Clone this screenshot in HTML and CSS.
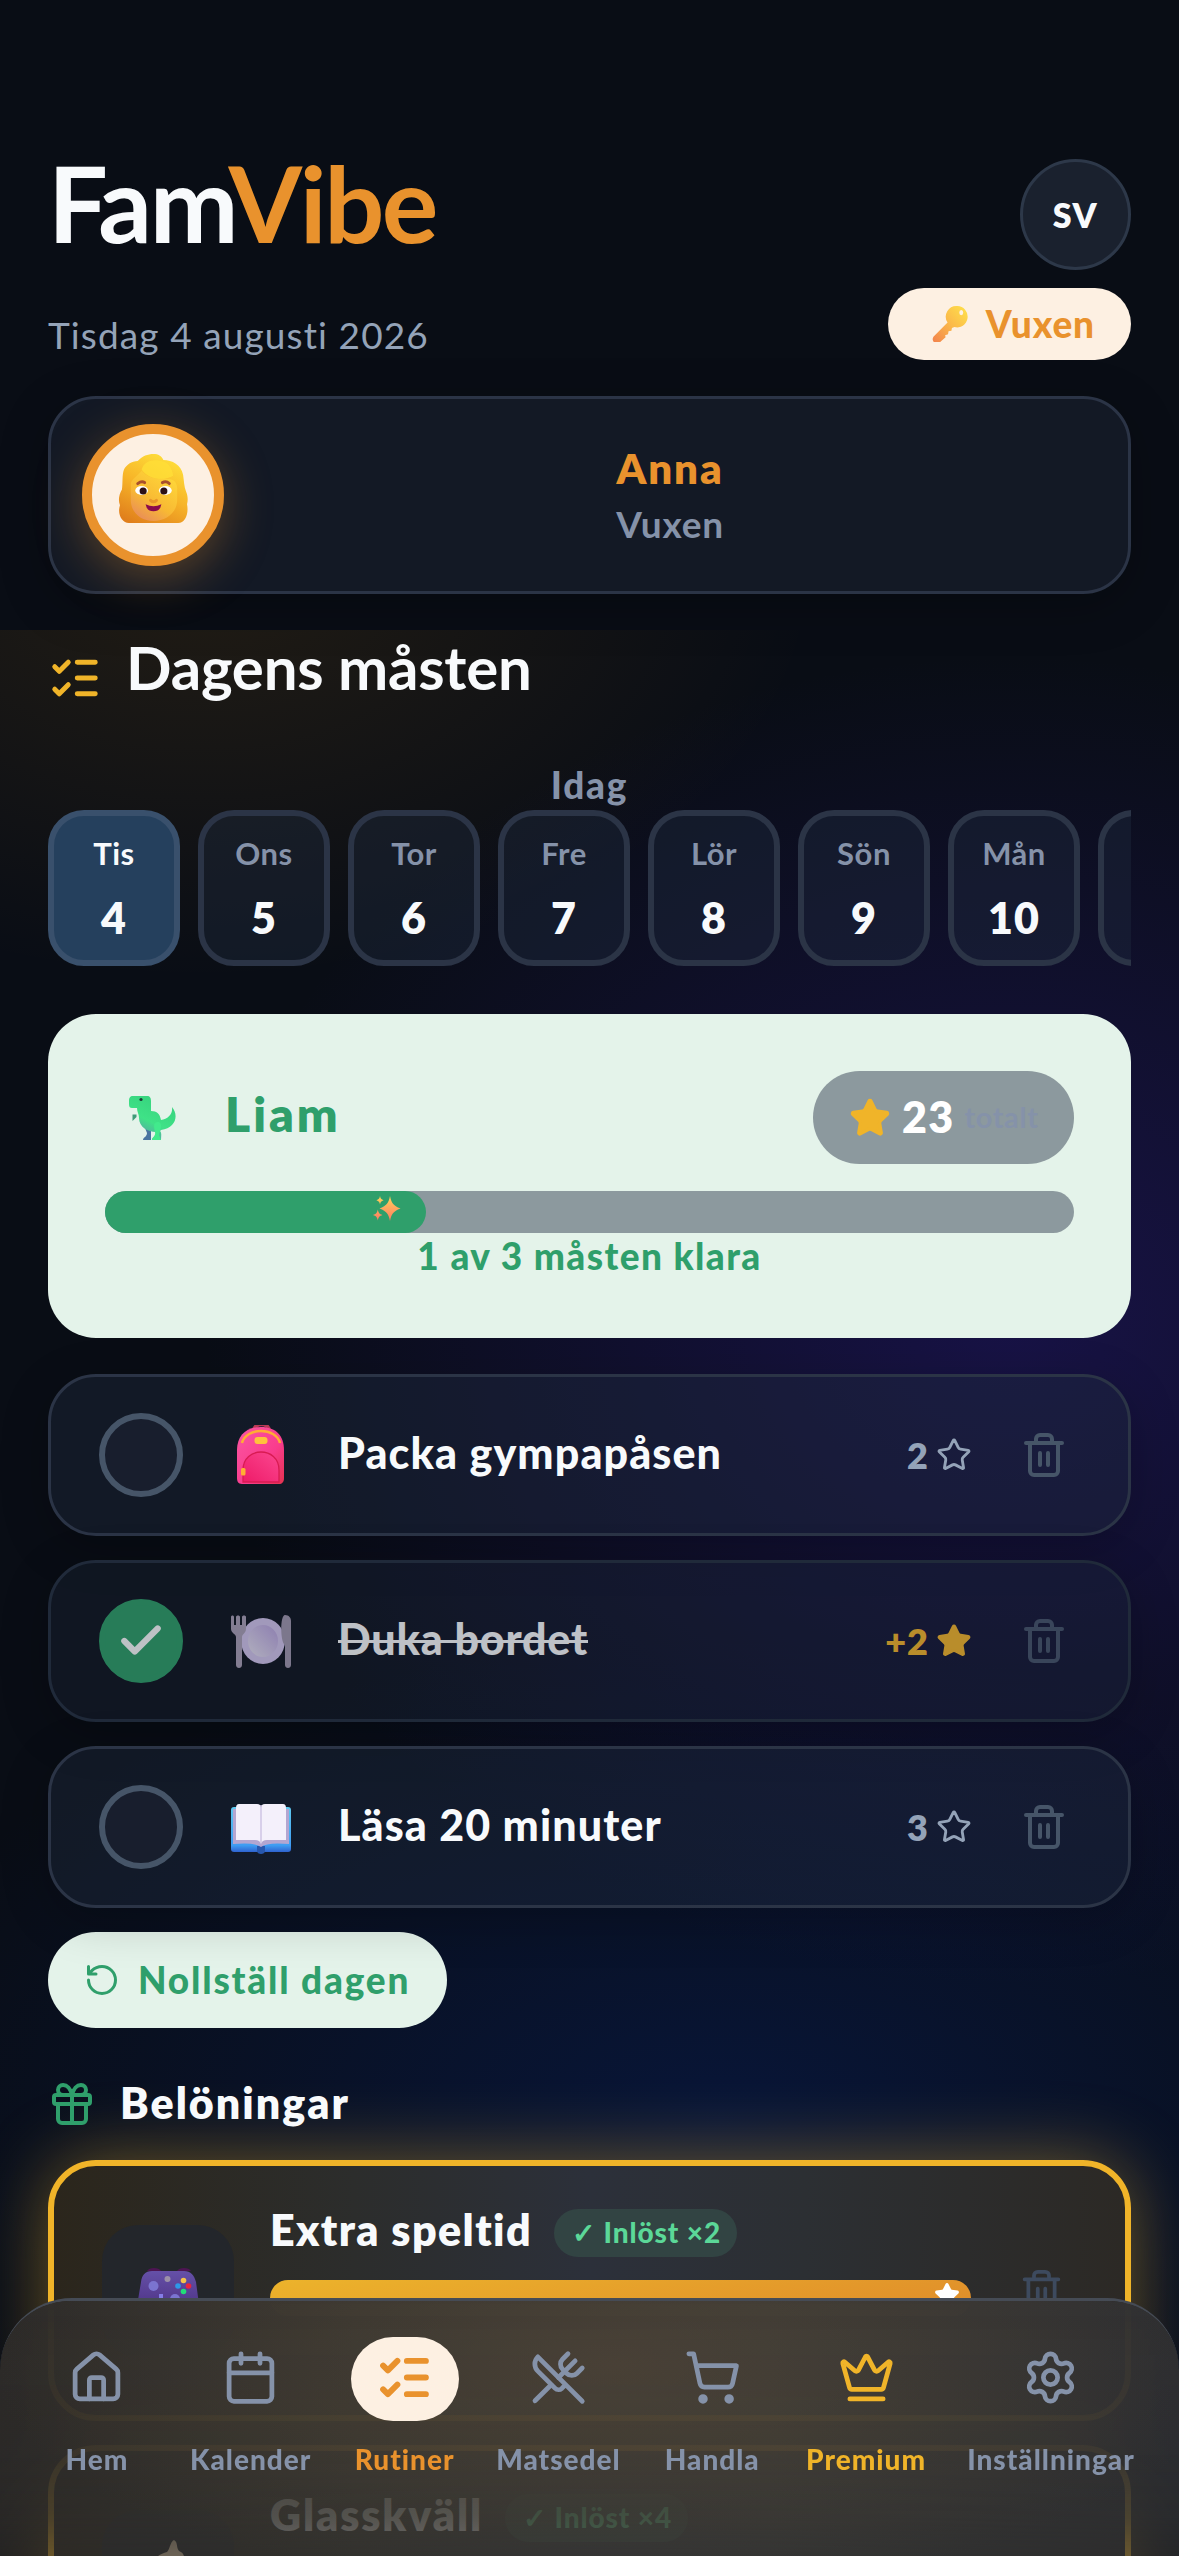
FILE: index.html
```html
<!DOCTYPE html>
<html lang="sv">
<head>
<meta charset="utf-8">
<title>FamVibe – Rutiner</title>
<link rel="stylesheet" href="styles.css">
</head>
<body>
<svg class="defs" aria-hidden="true">
  <defs>
    <symbol id="star" viewBox="0 0 24 24"><path d="M11.525 2.295a.53.53 0 0 1 .95 0l2.31 4.679a2.123 2.123 0 0 0 1.595 1.16l5.166.756a.53.53 0 0 1 .294.904l-3.736 3.638a2.123 2.123 0 0 0-.611 1.878l.882 5.14a.53.53 0 0 1-.771.56l-4.618-2.428a2.122 2.122 0 0 0-1.973 0L6.396 21.01a.53.53 0 0 1-.77-.56l.881-5.139a2.122 2.122 0 0 0-.611-1.879L2.16 9.795a.53.53 0 0 1 .294-.906l5.165-.755a2.122 2.122 0 0 0 1.597-1.16z"/></symbol>
    <symbol id="trash" viewBox="0 0 24 24"><path d="M10 11v6M14 11v6M19 6v14a2 2 0 0 1-2 2H7a2 2 0 0 1-2-2V6M3 6h18M8 6V4a2 2 0 0 1 2-2h4a2 2 0 0 1 2 2v2"/></symbol>
    <symbol id="checks" viewBox="0 0 24 24"><path d="M13 5h8M13 12h8M13 19h8M3 17l2 2 4-4M3 7l2 2 4-4"/></symbol>
    <linearGradient id="gKey" x1="1" y1="0" x2="0" y2="1"><stop offset="0" stop-color="#ffe34a"/><stop offset=".5" stop-color="#fbb84a"/><stop offset="1" stop-color="#f2804c"/></linearGradient>
    <linearGradient id="gHair" x1=".7" y1="0" x2=".2" y2="1"><stop offset="0" stop-color="#ffe03a"/><stop offset=".5" stop-color="#f7b428"/><stop offset="1" stop-color="#e07f1c"/></linearGradient>
    <linearGradient id="gFace" x1=".8" y1="0" x2=".2" y2="1"><stop offset="0" stop-color="#ffd93a"/><stop offset=".6" stop-color="#f8b933"/><stop offset="1" stop-color="#e88a5c"/></linearGradient>
    <linearGradient id="gDino" x1=".8" y1="0" x2=".3" y2="1"><stop offset="0" stop-color="#35d07c"/><stop offset=".6" stop-color="#3fe287"/><stop offset="1" stop-color="#5f93b0"/></linearGradient>
    <linearGradient id="gSpark" x1="0" y1="0" x2="0" y2="1"><stop offset="0" stop-color="#ffd35a"/><stop offset="1" stop-color="#ff7a63"/></linearGradient>
    <linearGradient id="gBag" x1="0" y1="0" x2="1" y2="1"><stop offset="0" stop-color="#fb56a2"/><stop offset=".6" stop-color="#f93c8d"/><stop offset="1" stop-color="#e5324f"/></linearGradient>
    <linearGradient id="gPocket" x1="1" y1="0" x2="0" y2="1"><stop offset="0" stop-color="#fb4790"/><stop offset="1" stop-color="#ee1b68"/></linearGradient>
    <linearGradient id="gPlate" x1="1" y1="0" x2="0" y2="1"><stop offset="0" stop-color="#b7a2e0"/><stop offset="1" stop-color="#e6e2f2"/></linearGradient>
    <linearGradient id="gCover" x1="0" y1="0" x2="0" y2="1"><stop offset="0" stop-color="#5fc9f0"/><stop offset=".85" stop-color="#3f9df2"/><stop offset="1" stop-color="#2f62cf"/></linearGradient>
    <linearGradient id="gPad" x1="0" y1="0" x2="0" y2="1"><stop offset="0" stop-color="#6550a8"/><stop offset="1" stop-color="#4b2f80"/></linearGradient>
  </defs>
</svg>

<header class="header">
  <div class="header-row">
    <div class="brand">
      <h1 class="logo">Fam<span class="logo-accent">Vibe</span></h1>
      <p class="date">Tisdag 4 augusti 2026</p>
    </div>
    <div class="header-actions">
      <button class="lang">SV</button>
      <button class="role-pill">
        <svg class="key" viewBox="0 0 38 38"><path fill="url(#gKey)" fill-rule="evenodd" d="M27 1a10.500 11 0 1 1-3 21.500l-2.500 1-.5 3-3 .5-.5 3-3 1 .5 2-5 4.500a4.500 4.500 0 0 1-7.500-5L17 18a11 11 0 0 1 10-17zM31 5.200a2 2.600 0 1 0 .1 5.200 2 2.600 0 0 0 0-5.200z"/></svg>
        <span>Vuxen</span>
      </button>
    </div>
  </div>
  <section class="member">
    <div class="member-avatar">
      <svg viewBox="0 0 72 72">
        <path fill="url(#gHair)" d="M36 1c5 0 8 2 10 6 9 0 18 5 20 15 1 7 1 12 3 17 2 5 2 9 1 13 2 10-2 19-9 19H11C4 71-1 62 2 53c-2-5-1-11 2-16 1-6 0-15 2-20 2-5 8-9 14-9 5-5 10-7 16-7z"/>
        <path fill="url(#gFace)" d="M13 32c0-5 6-8 11-14 6 7 12 8 24 8 8 0 12 3 12 10v12c0 12-11 21-24 21S13 60 13 48z"/>
        <path fill="#ffdf37" opacity=".8" d="M24 17c2-8 10-11 20-9 6 1 11 6 12 15-8 5-24 5-32-6z"/>
        <path fill="none" stroke="#a8502c" stroke-width="3" stroke-linecap="round" d="M20 31q4-3 7-1M45 30q4-2 7 1"/>
        <ellipse cx="24" cy="38" rx="6.500" ry="4.500" fill="#fff"/><ellipse cx="48" cy="38" rx="6.500" ry="4.500" fill="#fff"/>
        <circle cx="25.500" cy="38.500" r="3.600" fill="#2c1016"/><circle cx="46.500" cy="38.500" r="3.600" fill="#2c1016"/>
        <path fill="none" stroke="#e8962a" stroke-width="3" stroke-linecap="round" d="M33 48q3 3 6 0"/>
        <path fill="#8a0a4c" d="M28 52q8 4 16 0-1 7-8 7t-8-7z"/>
      </svg>
    </div>
    <div class="member-text">
      <strong class="member-name">Anna</strong>
      <span class="member-role">Vuxen</span>
    </div>
  </section>
</header>

<main class="main">
  <div class="title-row">
    <svg class="icon title-icon"><use href="#checks"/></svg>
    <h2 class="title">Dagens måsten</h2>
  </div>

  <p class="today">Idag</p>
  <div class="days">
    <button class="day day-active"><span class="day-name">Tis</span><span class="day-num">4</span></button>
    <button class="day"><span class="day-name">Ons</span><span class="day-num">5</span></button>
    <button class="day"><span class="day-name">Tor</span><span class="day-num">6</span></button>
    <button class="day"><span class="day-name">Fre</span><span class="day-num">7</span></button>
    <button class="day"><span class="day-name">Lör</span><span class="day-num">8</span></button>
    <button class="day"><span class="day-name">Sön</span><span class="day-num">9</span></button>
    <button class="day"><span class="day-name">Mån</span><span class="day-num">10</span></button>
    <button class="day"></button>
  </div>

  <section class="child">
    <div class="child-head">
      <div class="child-avatar">
        <svg viewBox="0 0 48 44">
          <path fill="#3f9b78" d="M3.500 18.500h4v2.500l-4 4zM13 18h4v6h-4z"/>
          <path fill="#4a74a0" d="M16 32l6 0v12h-8c0-3 4-3 4-7z"/>
          <path fill="url(#gDino)" d="M4 0h14c3 0 4 2 4 5v10c6 0 9 3 10 9 7-1 12-6 11-13 7 8 4 21-11 23l-1 1c2 2 1 5 1 9h-9c0-3 5-3 4-8-8 0-17-5-17-14 0-4-2-6-2-10H3c-2 0-3-1-3-4V5c0-3 1-5 4-5z"/>
          <path fill="#42ea8c" d="M25 30c0-5 8-6 7 1 0 3-2 5-2 8l2 5h-9c0-3 4-4 3-8-.5-2-1-4-1-6z"/>
          <circle cx="12" cy="3.500" r="1.600" fill="#1d3a34"/>
        </svg>
      </div>
      <h3 class="child-name">Liam</h3>
      <div class="total">
        <svg class="icon total-star"><use href="#star"/></svg>
        <strong class="total-num">23</strong>
        <span class="total-label">totalt</span>
      </div>
    </div>
    <div class="bar">
      <div class="bar-fill" style="width:33.1%">
        <svg class="sparkles" viewBox="0 0 28 25"><path fill="url(#gSpark)" d="M17 0c1.500 7 3 9.500 10.500 12.500C20 15.500 18.500 18 17 25c-1.500-7-3-9.500-10.500-12.500C14 9.500 15.500 7 17 0zM7 0c.6 2.600 1.200 3.400 3.600 4.200C8.200 5 7.600 5.800 7 8.400 6.400 5.800 5.800 5 3.400 4.200 5.800 3.400 6.400 2.600 7 0zM4.800 13.500c.8 3.500 1.500 4.500 4.700 5.500-3.200 1-3.900 2-4.700 5.500C4 21 3.200 20 0 19c3.200-1 4-2 4.800-5.500z"/></svg>
      </div>
    </div>
    <p class="child-status">1 av 3 måsten klara</p>
  </section>

  <ul class="tasks">
    <li class="task">
      <span class="check"></span>
      <span class="task-emoji">
        <svg viewBox="0 4 60 60">
          <path fill="none" stroke="#b83a55" stroke-width="4" d="M23 10c0-9 15-9 15 0"/>
          <path fill="url(#gBag)" d="M30 6c15 0 23 9 23 23v28c0 4-2 6-5 6H11c-4 0-5-3-5-6V29C6 15 15 6 30 6z"/>
          <path fill="none" stroke="#ffad33" stroke-width="2.600" d="M11 22C15 6 45 6 49 22"/>
          <rect x="23.500" y="16" width="13" height="7" rx="3" fill="#ffc23c"/>
          <path fill="url(#gPocket)" stroke="#d81b52" stroke-width="1.300" d="M12 61V49c0-24 36-24 36 0v12z"/>
          <rect x="10" y="47" width="4.500" height="7.500" rx="1.500" fill="#ffad33"/>
        </svg>
      </span>
      <span class="task-name">Packa gympapåsen</span>
      <span class="points">2<svg class="icon"><use href="#star"/></svg></span>
      <svg class="icon trash"><use href="#trash"/></svg>
    </li>
    <li class="task task-done">
      <span class="check"><svg class="icon" viewBox="0 0 24 24"><path d="M20 6 9 17l-5-5"/></svg></span>
      <span class="task-emoji">
        <svg viewBox="0 0 60 60">
          <ellipse cx="32" cy="30" rx="22" ry="23" fill="#d2c5ef"/>
          <ellipse cx="32" cy="30" rx="15" ry="16" fill="url(#gPlate)"/>
          <path fill="#aaa0b8" d="M0 6c0-2 3-2 3 0v8h2V6c0-2 4-2 4 0v8h2V6c0-2 4-2 4 0v12c0 4-4 5-4 8v28c0 4-6 4-6 0V26c0-3-5-4-5-8z"/>
          <path fill="#a198b0" d="M54 4c4 0 6 3 6 6v44c0 4-6 4-6 0V34c-5-3-5-30 0-30z"/>
        </svg>
      </span>
      <span class="task-name">Duka bordet</span>
      <span class="points">+2<svg class="icon"><use href="#star"/></svg></span>
      <svg class="icon trash"><use href="#trash"/></svg>
    </li>
    <li class="task">
      <span class="check"></span>
      <span class="task-emoji">
        <svg viewBox="0 0 60 60">
          <rect x="0" y="10" width="60" height="45" rx="3" fill="url(#gCover)"/>
          <path fill="#2857ad" d="M26 49h8v5c0 4-8 4-8 0z"/>
          <path fill="#b3a6d1" d="M2 12h56v35q-22-2-28 3-6-5-28-3z"/>
          <path fill="#f4f0fb" d="M8 7h18q4 0 4 4 0-4 4-4h18q3 0 3 4v32H36q-5 0-6 4-1-4-6-4H5V11q0-4 3-4z"/>
          <path fill="none" stroke="#cfc5e4" stroke-width="1.500" d="M30 8v38"/>
        </svg>
      </span>
      <span class="task-name">Läsa 20 minuter</span>
      <span class="points">3<svg class="icon"><use href="#star"/></svg></span>
      <svg class="icon trash"><use href="#trash"/></svg>
    </li>
  </ul>

  <button class="reset">
    <svg class="icon" viewBox="0 0 24 24"><path d="M3 12a9 9 0 1 0 9-9 9.750 9.750 0 0 0-6.740 2.740L3 8M3 3v5h5"/></svg>
    <span>Nollställ dagen</span>
  </button>

  <div class="rewards-title">
    <svg class="icon" viewBox="0 0 24 24"><rect x="3" y="7.500" width="18" height="4.500" rx="1"/><path d="M12 8v13.500M19 12v7.500a2 2 0 0 1-2 2H7a2 2 0 0 1-2-2V12M7.500 7.500a2.500 2.500 0 0 1 0-5A4.800 8 0 0 1 12 7.500a4.800 8 0 0 1 4.500-5 2.500 2.500 0 0 1 0 5"/></svg>
    <h3>Belöningar</h3>
  </div>

  <article class="reward">
    <div class="reward-icon">
      <svg class="gamepad" viewBox="0 0 62 48">
        <path fill="#4d1552" d="M10 3c2-4 12-4 14 0zM40 3c2-4 12-4 14 0z"/>
        <path fill="url(#gPad)" d="M15 3h32c7 0 10 4 12 11l4 30c-8 8-14-8-20-8H19C13 36 7 52-1 44L4 14C5 7 8 3 15 3z"/>
        <circle cx="16.500" cy="18" r="5" fill="#7b74d0"/><circle cx="38" cy="31" r="5" fill="#7b74d0"/>
        <path fill="#857de6" d="M22 26h4v4h4v4h-4v4h-4v-4h-4v-4h4z"/>
        <circle cx="30.500" cy="11" r="3" fill="#9c90a8"/><circle cx="46.500" cy="12.500" r="2.800" fill="#f5c24a"/><circle cx="51.500" cy="18" r="2.800" fill="#e8243f"/><circle cx="41" cy="18" r="2.800" fill="#2d98e8"/><circle cx="46.500" cy="23.500" r="2.800" fill="#22dd78"/>
      </svg>
    </div>
    <div class="reward-body">
      <div class="reward-head"><h4>Extra speltid</h4><span class="badge">✓ Inlöst ×2</span></div>
      <div class="reward-bar"><svg class="icon"><use href="#star"/></svg></div>
    </div>
    <svg class="icon trash"><use href="#trash"/></svg>
  </article>
  <article class="reward">
    <div class="reward-icon">
      <svg class="icecream" viewBox="0 0 62 80"><path fill="#f6dcb8" d="M18 24c0-6 6-8 12-10 3-3 3-10 7-12 4 2 2 7 5 11 6 2 6 8 4 12 5 3 4 10 0 12H16c-4-4-3-10 2-13z"/><path fill="#e09a4a" d="M16 37h30L34 76q-3 5-6 0z"/></svg>
    </div>
    <div class="reward-body">
      <div class="reward-head"><h4 class="wide">Glasskväll</h4><span class="badge">✓ Inlöst ×4</span></div>
    </div>
  </article>
</main>

<nav class="nav">
  <a class="nav-item"><span class="nav-icon"><svg class="icon" viewBox="0 0 24 24"><path d="M15 21v-8a1 1 0 0 0-1-1h-4a1 1 0 0 0-1 1v8"/><path d="M3 10a2 2 0 0 1 .709-1.528l7-5.999a2 2 0 0 1 2.582 0l7 5.999A2 2 0 0 1 21 10v9a2 2 0 0 1-2 2H5a2 2 0 0 1-2-2z"/></svg></span><span class="nav-label">Hem</span></a>
  <a class="nav-item"><span class="nav-icon"><svg class="icon" viewBox="0 0 24 24"><path d="M8 2v4M16 2v4M3 10h18"/><rect x="3" y="4" width="18" height="18" rx="2"/></svg></span><span class="nav-label">Kalender</span></a>
  <a class="nav-item nav-active"><span class="nav-icon"><svg class="icon"><use href="#checks"/></svg></span><span class="nav-label">Rutiner</span></a>
  <a class="nav-item"><span class="nav-icon"><svg class="icon" viewBox="0 0 24 24"><path d="m16 2-2.300 2.300a3 3 0 0 0 0 4.200l1.800 1.800a3 3 0 0 0 4.200 0L22 8"/><path d="M15 15 3.300 3.300a4.200 4.200 0 0 0 0 6l7.300 7.300c.7.7 2 .7 2.800 0L15 15Zm0 0 7 7"/><path d="m2.100 21.800 6.400-6.300M19 5l-7 7"/></svg></span><span class="nav-label">Matsedel</span></a>
  <a class="nav-item"><span class="nav-icon"><svg class="icon" viewBox="0 0 24 24"><circle cx="8" cy="21" r="1"/><circle cx="19" cy="21" r="1"/><path d="M2.050 2.050h2l2.660 12.420a2 2 0 0 0 2 1.580h9.780a2 2 0 0 0 1.950-1.570l1.650-7.430H5.120"/></svg></span><span class="nav-label">Handla</span></a>
  <a class="nav-item nav-premium"><span class="nav-icon"><svg class="icon" viewBox="0 0 24 24"><path d="M11.562 3.266a.5.5 0 0 1 .876 0L15.390 8.870a1 1 0 0 0 1.516.294L21.183 5.500a.5.5 0 0 1 .798.519l-2.834 10.246a1 1 0 0 1-.956.734H5.810a1 1 0 0 1-.957-.734L2.020 6.020a.5.5 0 0 1 .798-.519l4.276 3.664a1 1 0 0 0 1.516-.294z"/><path d="M5 21h14"/></svg></span><span class="nav-label">Premium</span></a>
  <a class="nav-item"><span class="nav-icon"><svg class="icon" viewBox="0 0 24 24"><path d="M9.671 4.136a2.340 2.340 0 0 1 4.659 0 2.340 2.340 0 0 0 3.319 1.915 2.340 2.340 0 0 1 2.330 4.033 2.340 2.340 0 0 0 0 3.831 2.340 2.340 0 0 1-2.330 4.033 2.340 2.340 0 0 0-3.319 1.915 2.340 2.340 0 0 1-4.659 0 2.340 2.340 0 0 0-3.320-1.915 2.340 2.340 0 0 1-2.330-4.033 2.340 2.340 0 0 0 0-3.831A2.340 2.340 0 0 1 6.350 6.051a2.340 2.340 0 0 0 3.319-1.915"/><circle cx="12" cy="12" r="3"/></svg></span><span class="nav-label">Inställningar</span></a>
</nav>
</body>
</html>
```
FILE: styles.css
```css
:root {
  --bg: #090d15;
  --text: #f8fafc;
  --muted: #8592a9;
  --orange: #e9922d;
  --gold: #f0b429;
  --green: #2f9f6b;
  --mint: #e4f3ea;
  --cream: #fdf0e2;
  --surface: rgba(32, 43, 62, .42);
  --line: #2b3446;
}

* { box-sizing: border-box; }

html, body { height: 2556px; }

body {
  margin: 0;
  overflow: hidden;
  font-family: Lato, "Liberation Sans", sans-serif;
  color: var(--text);
  background:
    radial-gradient(ellipse 620px 420px at 200px 560px, rgba(240, 160, 20, .11), transparent),
    radial-gradient(ellipse 850px 700px at 1010px 1320px, rgba(48, 28, 150, .38), transparent 95%),
    radial-gradient(ellipse 900px 480px at 720px 2120px, rgba(6, 40, 130, .32), transparent),
    var(--bg);
}

h1, h2, h3, h4, p, ul { margin: 0; padding: 0; }
button { font: inherit; color: inherit; border: 0; padding: 0; }
svg { display: block; flex: none; }

.defs { position: absolute; width: 0; height: 0; }

.icon {
  fill: none;
  stroke: currentColor;
  stroke-width: 2;
  stroke-linecap: round;
  stroke-linejoin: round;
}

/* Header */
.header {
  height: 630px;
  padding: 149px 48px 36px;
  background: var(--bg);
}
.header-row { display: flex; justify-content: space-between; height: 211px; }
.logo {
  font-size: 106px;
  font-weight: 700;
  line-height: 106px;
  letter-spacing: -2.500px;
}
.logo-accent { color: var(--orange); }
.date {
  margin-top: 58px;
  font-size: 37px;
  line-height: 44px;
  letter-spacing: 1.1px;
  color: #94a3b8;
}
.header-actions { display: flex; flex-direction: column; align-items: flex-end; gap: 18px; padding-top: 10px; }
.lang {
  width: 111px;
  height: 111px;
  border: 3px solid #2d3849;
  border-radius: 50%;
  background: #1a212e;
  font-size: 34px;
  font-weight: 800;
  letter-spacing: 1.5px;
}
.role-pill {
  display: flex;
  align-items: center;
  gap: 18px;
  height: 72px;
  padding: 0 36px 2px 43px;
  border-radius: 36px;
  background: var(--cream);
  color: var(--orange);
  font-size: 37px;
  font-weight: 900;
  letter-spacing: .9px;
}
.key { width: 37px; height: 37px; }

.member {
  display: flex;
  align-items: center;
  gap: 19px;
  height: 198px;
  margin-top: 36px;
  padding: 0 31px;
  border: 3px solid var(--line);
  border-radius: 48px;
  background: #131925;
  box-shadow: 0 12px 48px rgba(0, 0, 0, .25);
}
.member-avatar {
  display: flex;
  align-items: center;
  justify-content: center;
  width: 142px;
  height: 142px;
  padding-bottom: 14px;
  border: 10px solid var(--orange);
  border-radius: 50%;
  background: var(--cream);
  box-shadow: 0 12px 48px rgba(233, 146, 45, .34);
}
.member-avatar svg { width: 71px; height: 71px; }
.member-text { flex: 1; display: flex; flex-direction: column; align-items: center; padding-top: 2px; line-height: 56px; }
.member-name { font-size: 42px; font-weight: 800; letter-spacing: 1.900px; color: var(--orange); }
.member-role { font-size: 37px; font-weight: 700; letter-spacing: .8px; color: var(--muted); }

/* Day picker */
.main { height: 1926px; padding: 0 48px; overflow: hidden; }
.title-row { display: flex; align-items: flex-start; gap: 24px; height: 74px; }
.title-icon { width: 54px; height: 54px; margin-top: 21px; color: var(--gold); stroke-width: 2.200; }
.title { font-size: 60px; font-weight: 700; line-height: 75px; letter-spacing: -.2px; }
.today {
  margin-top: 56px;
  text-align: center;
  font-size: 37px;
  font-weight: 900;
  line-height: 49px;
  letter-spacing: 1.800px;
  color: var(--muted);
}
.days { display: flex; gap: 18px; margin-top: 1px; overflow: hidden; }
.day {
  flex: none;
  display: flex;
  flex-direction: column;
  align-items: center;
  gap: 19px;
  width: 132px;
  height: 156px;
  padding-top: 17px;
  border: 6px solid var(--line);
  border-radius: 36px;
  background: rgba(32, 43, 62, .42);
}
.day-active { border-color: #39506c; background: #25405d; }
.day-name { font-size: 31px; font-weight: 700; line-height: 40px; letter-spacing: .5px; color: var(--muted); }
.day-active .day-name { color: var(--text); }
.day-num { font-size: 43px; font-weight: 800; line-height: 52px; letter-spacing: 1px; }

/* Child progress */
.child {
  height: 324px;
  margin-top: 48px;
  padding: 57px;
  border-radius: 48px;
  background: var(--mint);
  color: var(--green);
}
.child-head { display: flex; align-items: center; height: 93px; }
.child-avatar { display: flex; justify-content: center; width: 96px; margin-right: 24px; }
.child-avatar svg { width: 48px; height: 44px; }
.child-name { padding-bottom: 7px; font-size: 48px; font-weight: 800; line-height: 60px; letter-spacing: 3px; }
.total {
  display: flex;
  align-items: center;
  width: 261px;
  height: 93px;
  margin-left: auto;
  padding-left: 36px;
  border-radius: 47px;
  background: #8c999e;
}
.total-star { width: 42px; height: 42px; color: var(--gold); fill: currentColor; }
.total-num { margin-left: 11px; padding-bottom: 2px; font-size: 43px; font-weight: 800; letter-spacing: 1.300px; color: #fff; }
.total-label { margin-left: 10px; padding-bottom: 2px; font-size: 29px; font-weight: 700; letter-spacing: .6px; color: #8592a9; }
.bar { height: 42px; margin-top: 27px; border-radius: 21px; background: #8c999e; }
.bar-fill { display: flex; justify-content: flex-end; height: 42px; padding: 5px 25px 0; border-radius: 21px; background: var(--green); }
.sparkles { width: 28px; height: 25px; }
.child-status { margin-top: 2px; text-align: center; font-size: 37px; font-weight: 900; line-height: 42px; letter-spacing: 1.400px; }

/* Tasks */
.tasks { display: flex; flex-direction: column; gap: 24px; margin-top: 36px; list-style: none; }
.task {
  display: flex;
  align-items: center;
  height: 162px;
  padding: 0 60px 0 48px;
  border: 3px solid var(--line);
  border-radius: 48px;
  background: var(--surface);
  box-shadow: 0 12px 48px rgba(0, 0, 0, .22);
}
.check {
  display: flex;
  align-items: center;
  justify-content: center;
  width: 84px;
  height: 84px;
  border: 6px solid #465568;
  border-radius: 50%;
  background: #181e2d;
}
.task-emoji { display: flex; justify-content: center; width: 84px; margin: 0 35px 0 36px; }
.task-emoji svg { width: 60px; height: 60px; }
.task-name { flex: 1; padding-bottom: 6px; font-size: 43px; font-weight: 900; letter-spacing: 1.100px; }
.points { display: flex; align-items: center; gap: 7px; font-size: 36px; font-weight: 800; letter-spacing: 1px; color: #94a3b8; }
.points .icon { width: 36px; height: 36px; stroke-width: 1.900; }
.trash { width: 48px; height: 48px; margin-left: 48px; color: #465568; }
.task-done { border-color: #202a3a; background: rgba(32, 43, 62, .32); }
.task-done > * { opacity: .75; }
.task-done .check { border-color: var(--green); background: var(--green); }
.task-done .check .icon { width: 50px; height: 50px; stroke-width: 3; }
.task-done .task-name { letter-spacing: .8px; text-decoration: line-through; text-decoration-thickness: 3px; }
.task-done .points { color: var(--gold); }
.task-done .points .icon { fill: currentColor; }

.reset {
  display: flex;
  align-items: center;
  gap: 18px;
  width: 399px;
  height: 96px;
  margin-top: 24px;
  padding: 0 36px 1px;
  border-radius: 48px;
  background: var(--mint);
  color: var(--green);
  font-size: 37px;
  font-weight: 900;
  letter-spacing: 1.800px;
  white-space: nowrap;
}
.reset .icon { width: 36px; height: 36px; }

/* Rewards */
.rewards-title { display: flex; align-items: center; gap: 24px; height: 52px; margin: 50px 0 30px; }
.rewards-title .icon { width: 48px; height: 48px; color: var(--green); }
.rewards-title h3 { padding-bottom: 3px; font-size: 43px; font-weight: 800; letter-spacing: 2px; }
.reward {
  display: flex;
  align-items: center;
  height: 261px;
  margin-bottom: 24px;
  padding: 0 61px 0 48px;
  border: 6px solid var(--gold);
  border-radius: 48px;
  background: linear-gradient(90deg, #2b261c, #2c2d2c 28%, #2c303a 50%, #2c2f33 70%, #2c2925);
  box-shadow: 0 0 72px rgba(240, 180, 41, .44);
}
.reward-icon {
  flex: none;
  display: flex;
  align-items: flex-start;
  justify-content: center;
  width: 132px;
  height: 132px;
  padding-top: 43px;
  border-radius: 36px;
  background: #23262b;
}
.gamepad { width: 62px; height: 48px; }
.icecream { width: 62px; height: 80px; margin-top: -15px; }
.reward-body { flex: 1; align-self: flex-start; margin-left: 36px; padding-top: 36px; }
.reward-head { display: flex; align-items: center; gap: 22px; }
.reward-head h4 { font-size: 43px; font-weight: 800; line-height: 50px; letter-spacing: 1.400px; }
.reward-head h4.wide { letter-spacing: 1.900px; }
.badge {
  height: 48px;
  margin-top: 7px;
  padding: 0 16px 0 18px;
  border-radius: 24px;
  background: #324443;
  color: #5bd898;
  font-size: 28px;
  font-weight: 900;
  line-height: 46px;
  letter-spacing: .9px;
}
.reward-bar {
  display: flex;
  justify-content: flex-end;
  height: 36px;
  margin-top: 23px;
  padding: 2px 11px 0;
  border-radius: 18px;
  background: linear-gradient(170deg, #ecb32b, #df8b2a);
}
.reward-bar .icon { width: 26px; height: 26px; color: #fff; fill: #fff; }
.reward .trash { width: 45px; height: 45px; color: #3d4a5e; }

.nav {
  position: fixed;
  left: 0;
  right: 0;
  bottom: 0;
  display: flex;
  height: 258px;
  padding: 36px 20px 0;
  border-top: 3px solid #454b55;
  border-radius: 72px 72px 0 0;
}
.nav::before {
  content: "";
  position: absolute;
  inset: 0;
  z-index: -1;
  border-radius: 69px 69px 0 0;
  background:
    radial-gradient(ellipse 620px 230px at 52% 25%, rgba(98, 80, 60, .45), transparent),
    linear-gradient(90deg, #2d2b29, #34332f 30%, #363633 65%, #2d2e31);
  mask-image: linear-gradient(#000, rgba(0, 0, 0, .98) 12%, rgba(0, 0, 0, .95) 60%, rgba(0, 0, 0, .86) 85%, rgba(0, 0, 0, .7));
}
.nav-item {
  flex: 1 1 0;
  min-width: min-content;
  display: flex;
  flex-direction: column;
  align-items: center;
  gap: 20px;
  color: var(--muted);
}
.nav-item:last-child { flex: 0 0 216px; }
.nav-icon { display: flex; align-items: center; justify-content: center; width: 108px; height: 84px; padding-bottom: 3px; border-radius: 42px; }
.nav-icon .icon { width: 57px; height: 57px; }
.nav-label { font-size: 28px; font-weight: 900; line-height: 37px; letter-spacing: 1px; }
.nav-active { color: var(--orange); }
.nav-active .nav-icon { background: var(--cream); }
.nav-active .icon { stroke-width: 2.500; }
.nav-premium { color: var(--gold); }
```
